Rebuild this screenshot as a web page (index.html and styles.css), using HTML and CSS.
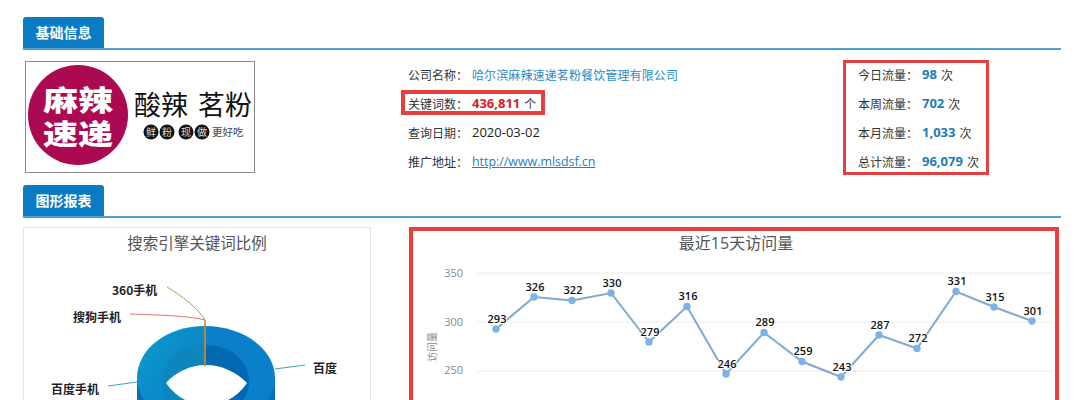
FILE: index.html
```html
<!DOCTYPE html>
<html lang="zh-CN">
<head>
<meta charset="utf-8">
<title>基础信息</title>
<link rel="stylesheet" href="styles.css">
</head>
<body>
<div class="page">
  <div class="head"><h2 class="tab">基础信息</h2></div>
  <div class="info">
    <svg class="logo" viewBox="26 62 228 110" width="228" height="110" role="img" aria-label="麻辣速递 酸辣茗粉">
      <circle class="logo-disc" cx="78" cy="115" r="50"/>
      <text class="logo-big" x="78" y="111" textLength="70" lengthAdjust="spacingAndGlyphs">麻辣</text>
      <text class="logo-big" x="78" y="145" textLength="70" lengthAdjust="spacingAndGlyphs">速递</text>
      <text class="logo-brand" x="134" y="115" textLength="54" lengthAdjust="spacingAndGlyphs">酸辣</text>
      <text class="logo-brand" x="198" y="115" textLength="54" lengthAdjust="spacingAndGlyphs">茗粉</text>
      <circle class="logo-dot" cx="151" cy="132" r="7.5"/>
      <circle class="logo-dot" cx="167" cy="132" r="7.5"/>
      <circle class="logo-dot" cx="186" cy="132" r="7.5"/>
      <circle class="logo-dot" cx="202" cy="132" r="7.5"/>
      <text class="logo-dot-text" x="151" y="136">鲜</text>
      <text class="logo-dot-text" x="167" y="136">粉</text>
      <text class="logo-dot-text" x="186" y="136">现</text>
      <text class="logo-dot-text" x="202" y="136">做</text>
      <text class="logo-small" x="212" y="136">更好吃</text>
    </svg>
    <ul class="facts">
      <li class="row"><span class="label">公司名称：</span><a class="company" href="#">哈尔滨麻辣速递茗粉餐饮管理有限公司</a></li>
      <li class="row row-mark"><span class="label">关键词数：</span><b class="num-red">436,811</b><span class="unit">个</span></li>
      <li class="row"><span class="label">查询日期：</span><span class="latin">2020-03-02</span></li>
      <li class="row"><span class="label">推广地址：</span><a class="latin link" href="#">http://www.mlsdsf.cn</a></li>
    </ul>
    <ul class="stats">
      <li class="row"><span class="label">今日流量：</span><b class="num-blue">98</b><span class="unit">次</span></li>
      <li class="row"><span class="label">本周流量：</span><b class="num-blue">702</b><span class="unit">次</span></li>
      <li class="row"><span class="label">本月流量：</span><b class="num-blue">1,033</b><span class="unit">次</span></li>
      <li class="row"><span class="label">总计流量：</span><b class="num-blue">96,079</b><span class="unit">次</span></li>
    </ul>
  </div>
  <div class="head"><h2 class="tab">图形报表</h2></div>
  <div class="charts">
    <div class="panel panel-pie">
      <svg viewBox="24 228 346 199" width="346" height="199">
        <defs>
          <linearGradient id="ringLeft" x1="0" y1="0" x2="1" y2="1">
            <stop offset="0" stop-color="#0b9ccf"/>
            <stop offset="1" stop-color="#0b79c2"/>
          </linearGradient>
        </defs>
        <text class="chart-title title-pie" x="197" y="249">搜索引擎关键词比例</text>
        <path class="ring-side" d="M137 376V425H275V376Z"/>
        <path fill="url(#ringLeft)" d="M205 326C167 326 137 349 137 378C137 396 150 410 170 418L205 400Z"/>
        <path class="ring-right" d="M205 326C243 326 275 349 275 378C275 396 262 410 242 418L205 400Z"/>
        <path class="wall-left" d="M205 345C181 345 163 358 163 383C163 395 172 405 180 410L205 400Z"/>
        <path class="wall-right" d="M205 345C231 345 249 360 249 383C249 395 240 405 232 410L205 400Z"/>
        <path class="hole" d="M166 383C176 372 190 365 206 365C222 365 236 372 247 383C238 396 226 404 206 406C188 404 175 396 166 383Z"/>
        <path class="seam" d="M205 325V366"/>
        <path class="lead lead-green" d="M167 287C182 296 198 308 205 320V326"/>
        <path class="lead lead-red" d="M130 314C160 315 190 316 205 320V326"/>
        <path class="lead lead-blue" d="M275 369L305 365"/>
        <path class="lead lead-blue" d="M108 386L137 382"/>
        <text class="pie-label" x="112" y="295">360手机</text>
        <text class="pie-label" x="73" y="322">搜狗手机</text>
        <text class="pie-label" x="313" y="373">百度</text>
        <text class="pie-label" x="51" y="394">百度手机</text>
      </svg>
    </div>
    <div class="panel panel-line">
      <svg viewBox="413 231 642 196" width="642" height="196">
        <text class="chart-title" x="736" y="249">最近15天访问量</text>
        <path class="grid" d="M477 273H1052M477 322H1052M477 371H1052"/>
        <text class="axis" x="463" y="277">350</text>
        <text class="axis" x="463" y="326">300</text>
        <text class="axis" x="463" y="374">250</text>
        <text class="axis-title" transform="translate(436 362) rotate(-90)">访问量</text>
        <polyline class="series" points="496,329 534,297 572,300.5 611,293 649,342 687,306.5 726,374 764,332.5 802,361.5 841,377 879,335 917,348.5 956,291.5 994,307 1032,321"/>
        <g class="dots">
          <circle cx="496" cy="329" r="3.7"/><circle cx="534" cy="297" r="3.7"/><circle cx="572" cy="300.5" r="3.7"/>
          <circle cx="611" cy="293" r="3.7"/><circle cx="649" cy="342" r="3.7"/><circle cx="687" cy="306.5" r="3.7"/>
          <circle cx="726" cy="374" r="3.7"/><circle cx="764" cy="332.5" r="3.7"/><circle cx="802" cy="361.5" r="3.7"/>
          <circle cx="841" cy="377" r="3.7"/><circle cx="879" cy="335" r="3.7"/><circle cx="917" cy="348.5" r="3.7"/>
          <circle cx="956" cy="291.5" r="3.7"/><circle cx="994" cy="307" r="3.7"/><circle cx="1032" cy="321" r="3.7"/>
        </g>
        <g class="values">
          <text x="497" y="323">293</text><text x="535" y="291">326</text><text x="573" y="294">322</text>
          <text x="612" y="287">330</text><text x="650" y="336">279</text><text x="688" y="300">316</text>
          <text x="727" y="368">246</text><text x="765" y="326">289</text><text x="803" y="355">259</text>
          <text x="842" y="371">243</text><text x="880" y="329">287</text><text x="918" y="342">272</text>
          <text x="957" y="285">331</text><text x="995" y="301">315</text><text x="1033" y="315">301</text>
        </g>
      </svg>
    </div>
  </div>
</div>
</body>
</html>
```
FILE: styles.css
```css
* { box-sizing: border-box; }
html, body { margin: 0; padding: 0; background: #fff; overflow: hidden; }
body { font-family: "Open Sans", "Noto Sans CJK SC", sans-serif; color: #333; }
ul { list-style: none; margin: 0; padding: 0; }

.page { width: 1088px; height: 400px; padding: 17px 27px 0 23px; overflow: hidden; }

.head { height: 33px; border-bottom: 2px solid #4fa3d4; }
.tab {
  width: 81px; height: 31px; margin: 0;
  background: #0a7cc4; color: #fff;
  border-radius: 3px 3px 0 0;
  font: 700 14px/31px "Noto Sans CJK SC", sans-serif;
  text-align: center;
}

.info { display: flex; align-items: flex-start; height: 135px; padding-top: 10px; }
.logo { display: block; box-sizing: content-box; flex: none; margin: 1px 0 0 2px; border: 1px solid #8a8a8a; }
.logo-disc { fill: #ab0a52; }
.logo-big { fill: #fff; font: 900 28px "Noto Sans CJK SC", sans-serif; text-anchor: middle; }
.logo-brand { fill: #111; font: 400 27px "Noto Sans CJK SC", sans-serif; }
.logo-dot { fill: #111; }
.logo-dot-text { fill: #ddd; font: 400 10px "Noto Sans CJK SC", sans-serif; text-anchor: middle; }
.logo-small { fill: #444; font: 400 10.5px "Noto Sans CJK SC", sans-serif; }

.facts { display: flex; flex-direction: column; gap: 7px; width: 435px; margin-left: 153px; padding-top: 3px; }
.stats {
  display: flex; flex-direction: column; gap: 7px;
  width: 146px; height: 115px; padding-left: 12px;
  border: 3px solid #e5403f;
}
.row { display: flex; align-items: center; height: 22px; font-size: 13px; white-space: nowrap; }
.label { flex: none; width: 64px; font: 400 12px "Noto Sans CJK SC", sans-serif; color: #333; }
.company { font: 400 12px "Noto Sans CJK SC", sans-serif; letter-spacing: .12px; color: #2b8ac4; text-decoration: none; }
.latin { color: #222; }
.link { color: #1f80bd; font-size: 12.4px; text-decoration: underline; }
.num-red { color: #e01b1f; }
.num-blue { color: #1a7cb9; }
.unit { margin-left: 4px; font: 400 12px "Noto Sans CJK SC", sans-serif; color: #333; }

.row-mark { position: relative; width: fit-content; }
.row-mark::after {
  content: ""; position: absolute;
  top: -2px; right: -9px; bottom: -1px; left: -7px;
  border: 4px solid #e5403f;
}

.charts { display: flex; gap: 38px; margin-top: 9px; height: 200px; }
.panel { flex: none; overflow: hidden; }
.panel svg { display: block; }
.panel-pie { width: 348px; border: 1px solid #e3e3e3; }
.panel-line { width: 650px; border: 4px solid #e5403f; }

.chart-title { fill: #555; font: 400 16px "Open Sans", "Noto Sans CJK SC", sans-serif; text-anchor: middle; }
.title-pie { font-size: 15.5px; }
.ring-side { fill: #0670b5; }
.ring-right { fill: #0a80cb; }
.wall-left { fill: #0c86bd; }
.wall-right { fill: #0468b1; }
.hole { fill: #fff; }
.seam { fill: none; stroke: #b08a3c; stroke-width: 2; }
.lead { fill: none; stroke-width: 1; }
.lead-green { stroke: #8db255; }
.lead-red { stroke: #e76f6f; }
.lead-blue { stroke: #3f9fc9; }
.pie-label { fill: #222; font: 700 12px "Noto Sans CJK SC", sans-serif; }

.grid { fill: none; stroke: #ececec; stroke-width: 1; }
.axis { fill: #888; font: 400 11px "Open Sans", sans-serif; text-anchor: end; }
.axis-title { fill: #888; font: 400 10px "Noto Sans CJK SC", sans-serif; }
.series { fill: none; stroke: #7fa9d0; stroke-width: 2; }
.dots circle { fill: #7cb2e6; }
.values text {
  fill: #111; font: 600 11px "Open Sans", sans-serif; text-anchor: middle;
  paint-order: stroke; stroke: #fff; stroke-width: 2px;
}
```
